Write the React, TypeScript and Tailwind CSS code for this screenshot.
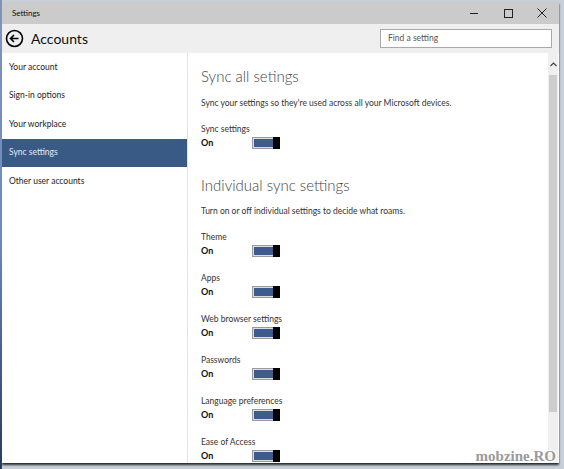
import React from "react";

const font = { fontFamily: 'Lato, "Open Sans", sans-serif' };

function Toggle() {
  return (
    <div className="w-[28px] h-[12px] border border-[#9a9a9a] bg-[#dcdcdc] p-[1px] flex">
      <div className="flex-1 bg-[#3d5b8c]" />
      <div className="w-[7px] bg-black -my-[2px] -mr-[2px]" />
    </div>
  );
}

function Setting({ label }: { label: string }) {
  return (
    <div className="mt-[14px]">
      <div className="text-[8.5px] leading-[12px] text-[#333]">{label}</div>
      <div className="mt-[1px] h-[14px] flex items-center">
        <div className="w-[51px] text-[9px] font-bold text-[#111]">On</div>
        <Toggle />
      </div>
    </div>
  );
}

const navItems = ["Your account", "Sign-in options", "Your workplace", "Sync settings", "Other user accounts"];

export default function App() {
  return (
    <div className="relative w-[564px] h-[469px] overflow-hidden bg-[#c9cfd8] pt-[2px] pl-[2px]" style={font}>
      <div className="absolute left-0 top-0 w-[2px] h-full bg-gradient-to-b from-[#8094b8] via-[#6a8cc0] to-[#2a3a5a]" />
      <div className="w-[557px] h-[461px] bg-white flex flex-col shadow-[0_2px_2px_rgba(0,0,0,0.8)]">
        {/* title bar */}
        <div className="h-[22px] bg-[#cbcbcb] flex items-center pl-[10px] text-[8px] text-[#111]">
          <span>Settings</span>
          <div className="ml-auto flex items-center h-full">
            <div className="w-[34px] h-full flex items-center justify-center">
              <div className="w-[8px] h-[1px] bg-[#222]" />
            </div>
            <div className="w-[34px] h-full flex items-center justify-center">
              <div className="w-[9px] h-[9px] border border-[#222]" />
            </div>
            <div className="w-[34px] h-full flex items-center justify-center">
              <svg width="10" height="10" viewBox="0 0 10 10">
                <path d="M0.5 0.5 L9.5 9.5 M9.5 0.5 L0.5 9.5" stroke="#222" strokeWidth="1" />
              </svg>
            </div>
          </div>
        </div>
        {/* header */}
        <div className="h-[29px] bg-[#efefef] flex items-center pl-[3px] pr-[7px]">
          <svg width="19" height="19" viewBox="0 0 19 19">
            <circle cx="9.5" cy="9.5" r="8" fill="none" stroke="#000" strokeWidth="1.6" />
            <path d="M13.5 9.5 H5.5 M9 6 L5.5 9.5 L9 13" fill="none" stroke="#000" strokeWidth="1.6" />
          </svg>
          <span className="ml-[7px] text-[14px] leading-[20px] text-[#111]">Accounts</span>
          <div className="ml-auto w-[172px] h-[19px] border border-[#a9a9a9] bg-white flex items-center pl-[7px] text-[8.5px] text-[#555]">
            Find a setting
          </div>
        </div>
        {/* body */}
        <div className="flex flex-1 min-h-0">
          <div className="w-[186px] border-r border-[#e2e2e2]">
            {navItems.map((n) => (
              <div
                key={n}
                className={`h-[28.5px] flex items-center pl-[7px] text-[8.5px] ${
                  n === "Sync settings" ? "bg-[#3a5a86] text-[#e4e9f2]" : "text-[#222]"
                }`}
              >
                {n}
              </div>
            ))}
          </div>
          <div className="flex-1 pl-[13px] pt-[13px] overflow-hidden">
            <div className="text-[15px] leading-[20px] font-light text-[#444]">Sync all setings</div>
            <div className="mt-[11px] text-[8.5px] leading-[12px] text-[#333]">
              Sync your settings so they're used across all your Microsoft devices.
            </div>
            <Setting label="Sync settings" />
            <div className="mt-[25px] text-[15px] leading-[20px] font-light text-[#444]">Individual sync settings</div>
            <div className="mt-[10px] text-[8.5px] leading-[12px] text-[#333]">
              Turn on or off individual settings to decide what roams.
            </div>
            <Setting label="Theme" />
            <Setting label="Apps" />
            <Setting label="Web browser settings" />
            <Setting label="Passwords" />
            <Setting label="Language preferences" />
            <Setting label="Ease of Access" />
          </div>
          {/* scrollbar */}
          <div className="w-[10px] bg-[#efefef] flex flex-col items-center mr-[1px]">
            <div className="h-[22px] flex items-center justify-center">
              <svg width="7" height="5" viewBox="0 0 7 5">
                <path d="M0.5 4 L3.5 1 L6.5 4" fill="none" stroke="#444" strokeWidth="1.2" />
              </svg>
            </div>
            <div className="w-[8px] h-[337px] bg-[#cdcdcd]" />
          </div>
        </div>
      </div>
      <div
        className="absolute right-[8px] bottom-[2px] text-[15px] font-bold text-[#9a9a9a]"
        style={{ fontFamily: '"Liberation Serif", "DejaVu Serif", serif', textShadow: "1px 1px 0 #fff, -1px -1px 0 #fff, 1px -1px 0 #fff, -1px 1px 0 #fff" }}
      >
        mobzine.RO
      </div>
    </div>
  );
}
